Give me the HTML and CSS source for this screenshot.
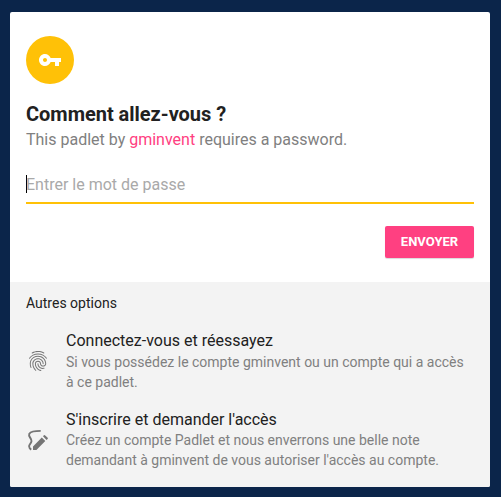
FILE: index.html
```html
<!DOCTYPE html>
<html lang="fr">
<head>
<meta charset="utf-8">
<title>Comment allez-vous ?</title>
<link rel="stylesheet" href="styles.css">
</head>
<body>
<main class="card">
  <section class="main">
    <div class="badge">
      <svg width="24" height="24" viewBox="0 0 24 24" fill="#fff"><path d="M12.65 10C11.83 7.67 9.61 6 7 6c-3.31 0-6 2.69-6 6s2.69 6 6 6c2.61 0 4.83-1.67 5.65-4H17v4h4v-4h2v-4H12.65zM7 14c-1.1 0-2-.9-2-2s.9-2 2-2 2 .9 2 2-.9 2-2 2z"/></svg>
    </div>
    <h1 class="title">Comment allez-vous ?</h1>
    <p class="subtitle">This padlet by <a class="link">gminvent</a> requires a password.</p>
    <div class="field"><span class="caret"></span><span class="placeholder">Entrer le mot de passe</span></div>
    <div class="actions"><button class="button">ENVOYER</button></div>
  </section>
  <section class="options">
    <h2 class="heading">Autres options</h2>
    <div class="option">
      <svg class="icon" viewBox="0 0 24 24"><path d="M17.81 4.47c-.08 0-.16-.02-.23-.06C15.66 3.42 14 3 12.01 3c-1.98 0-3.86.47-5.57 1.41-.24.13-.54.04-.68-.2-.13-.24-.04-.55.2-.68C7.82 2.52 9.86 2 12.01 2c2.13 0 3.99.47 6.03 1.52.25.13.34.43.21.67-.09.18-.26.28-.44.28zM3.5 9.72c-.1 0-.2-.03-.29-.09-.23-.16-.28-.47-.12-.7.99-1.4 2.25-2.5 3.75-3.27C9.98 4.04 14 4.03 17.15 5.65c1.5.77 2.76 1.86 3.75 3.25.16.22.11.54-.12.7-.23.16-.54.11-.7-.12-.9-1.26-2.04-2.25-3.39-2.94-2.87-1.47-6.54-1.47-9.4.01-1.36.7-2.5 1.7-3.4 2.96-.08.14-.23.21-.39.21zm6.25 12.07c-.13 0-.26-.05-.35-.15-.87-.87-1.34-1.43-2.01-2.64-.69-1.23-1.05-2.73-1.05-4.34 0-2.97 2.54-5.39 5.66-5.39s5.66 2.42 5.66 5.39c0 .28-.22.5-.5.5s-.5-.22-.5-.5c0-2.42-2.09-4.39-4.66-4.39-2.57 0-4.66 1.97-4.66 4.39 0 1.44.32 2.77.93 3.85.64 1.15 1.08 1.64 1.85 2.42.19.2.19.51 0 .71-.11.1-.24.15-.37.15zm7.17-1.85c-1.19 0-2.24-.3-3.1-.89-1.49-1.01-2.38-2.65-2.38-4.39 0-.28.22-.5.5-.5s.5.22.5.5c0 1.41.72 2.74 1.94 3.56.71.48 1.54.71 2.54.71.24 0 .64-.03 1.04-.1.27-.05.53.13.58.41.05.27-.13.53-.41.58-.57.11-1.07.12-1.21.12zM14.91 22c-.04 0-.09-.01-.13-.02-1.59-.44-2.63-1.03-3.72-2.1-1.4-1.39-2.17-3.24-2.17-5.22 0-1.62 1.38-2.94 3.08-2.94 1.7 0 3.08 1.32 3.08 2.94 0 1.07.93 1.94 2.08 1.94s2.08-.87 2.08-1.94c0-3.77-3.25-6.83-7.25-6.83-2.84 0-5.44 1.58-6.61 4.03-.39.81-.59 1.76-.59 2.8 0 .78.07 2.01.67 3.61.1.26-.03.55-.29.64-.26.1-.55-.04-.64-.29-.49-1.31-.73-2.61-.73-3.96 0-1.2.23-2.29.68-3.24 1.33-2.79 4.28-4.6 7.51-4.6 4.55 0 8.25 3.51 8.25 7.83 0 1.62-1.38 2.94-3.08 2.94s-3.08-1.32-3.08-2.94c0-1.07-.93-1.94-2.08-1.94s-2.08.87-2.08 1.94c0 1.71.66 3.31 1.87 4.51.95.94 1.86 1.46 3.27 1.85.27.07.42.35.35.61-.05.23-.26.38-.47.38z"/></svg>
      <div class="text">
        <h3 class="name">Connectez-vous et réessayez</h3>
        <p class="desc">Si vous possédez le compte gminvent ou un compte qui a accès<br>à ce padlet.</p>
      </div>
    </div>
    <div class="option">
      <svg class="icon" viewBox="0 0 24 24"><path d="M14.7 2.9C10 2.9 4.9 3.4 3.3 5.7C1.9 8.8 5.9 10.4 5.5 13.2C5.2 15.6 3 16.2 3.1 18.3C3.2 20 4 21 5.3 21.6" fill="none" stroke="#757575" stroke-width="1.9"/><path d="M7 18.4L15.8 9.4L19.3 12.9L10.4 22H7zM17 8.2L17.9 7.3Q18.5 6.8 19.2 7.4L21.7 9.8Q22.2 10.5 21.6 11.1L20.5 12z"/></svg>
      <div class="text">
        <h3 class="name">S'inscrire et demander l'accès</h3>
        <p class="desc">Créez un compte Padlet et nous enverrons une belle note<br>demandant à gminvent de vous autoriser l'accès au compte.</p>
      </div>
    </div>
  </section>
</main>
</body>
</html>
```
FILE: styles.css
```css
* { box-sizing: border-box; }
body {
  margin: 0;
  padding: 12px 11px 10px 10px;
  background: #0b254a;
  font-family: Roboto, sans-serif;
  color: #212121;
}
h1, h2, h3, p { margin: 0; }
.card {
  height: 475px;
  border-radius: 2px;
  overflow: hidden;
  background: #fff;
}
.main { height: 270px; padding: 24px 16px; }
.badge {
  display: flex;
  align-items: center;
  justify-content: center;
  width: 48px;
  height: 48px;
  border-radius: 50%;
  background: #ffc107;
}
.title { margin-top: 16px; font-size: 20px; line-height: 28px; font-weight: 700; letter-spacing: -0.02px; }
.subtitle { font-size: 16px; line-height: 24px; font-weight: 400; color: #808080; }
.link { color: #ff4081; }
.field {
  display: flex;
  align-items: center;
  height: 40px;
  margin-top: 12px;
  padding-top: 2px;
  border-bottom: 2px solid #ffc107;
  font-size: 16px;
  font-weight: 400;
  color: #a9a9a9;
}
.caret { width: 1px; height: 18px; margin-right: -1px; background: #000; }
.actions { display: flex; justify-content: flex-end; margin-top: 22px; }
.button {
  width: 89px;
  height: 32px;
  padding: 0;
  border: 0;
  border-radius: 2px;
  background: #ff4081;
  box-shadow: 0 1px 1px rgba(0, 0, 0, .15);
  color: #fff;
  font: 700 13px/32px Roboto, sans-serif;
}
.options { height: 205px; padding: 11px 16px; background: #f3f3f3; }
.heading { font-size: 14px; line-height: 20px; font-weight: 400; }
.option { display: flex; align-items: center; gap: 16px; height: 64px; margin-top: 16px; }
.option + .option { margin-top: 15px; }
.icon { flex: none; width: 24px; height: 24px; fill: #757575; }
.text { flex: 1; height: 64px; white-space: nowrap; }
.name { font-size: 16px; line-height: 24px; font-weight: 400; }
.desc { margin-top: -1px; font-size: 14px; line-height: 20px; font-weight: 400; color: #808080; }
.option + .option .desc { margin-top: -2px; }
```
